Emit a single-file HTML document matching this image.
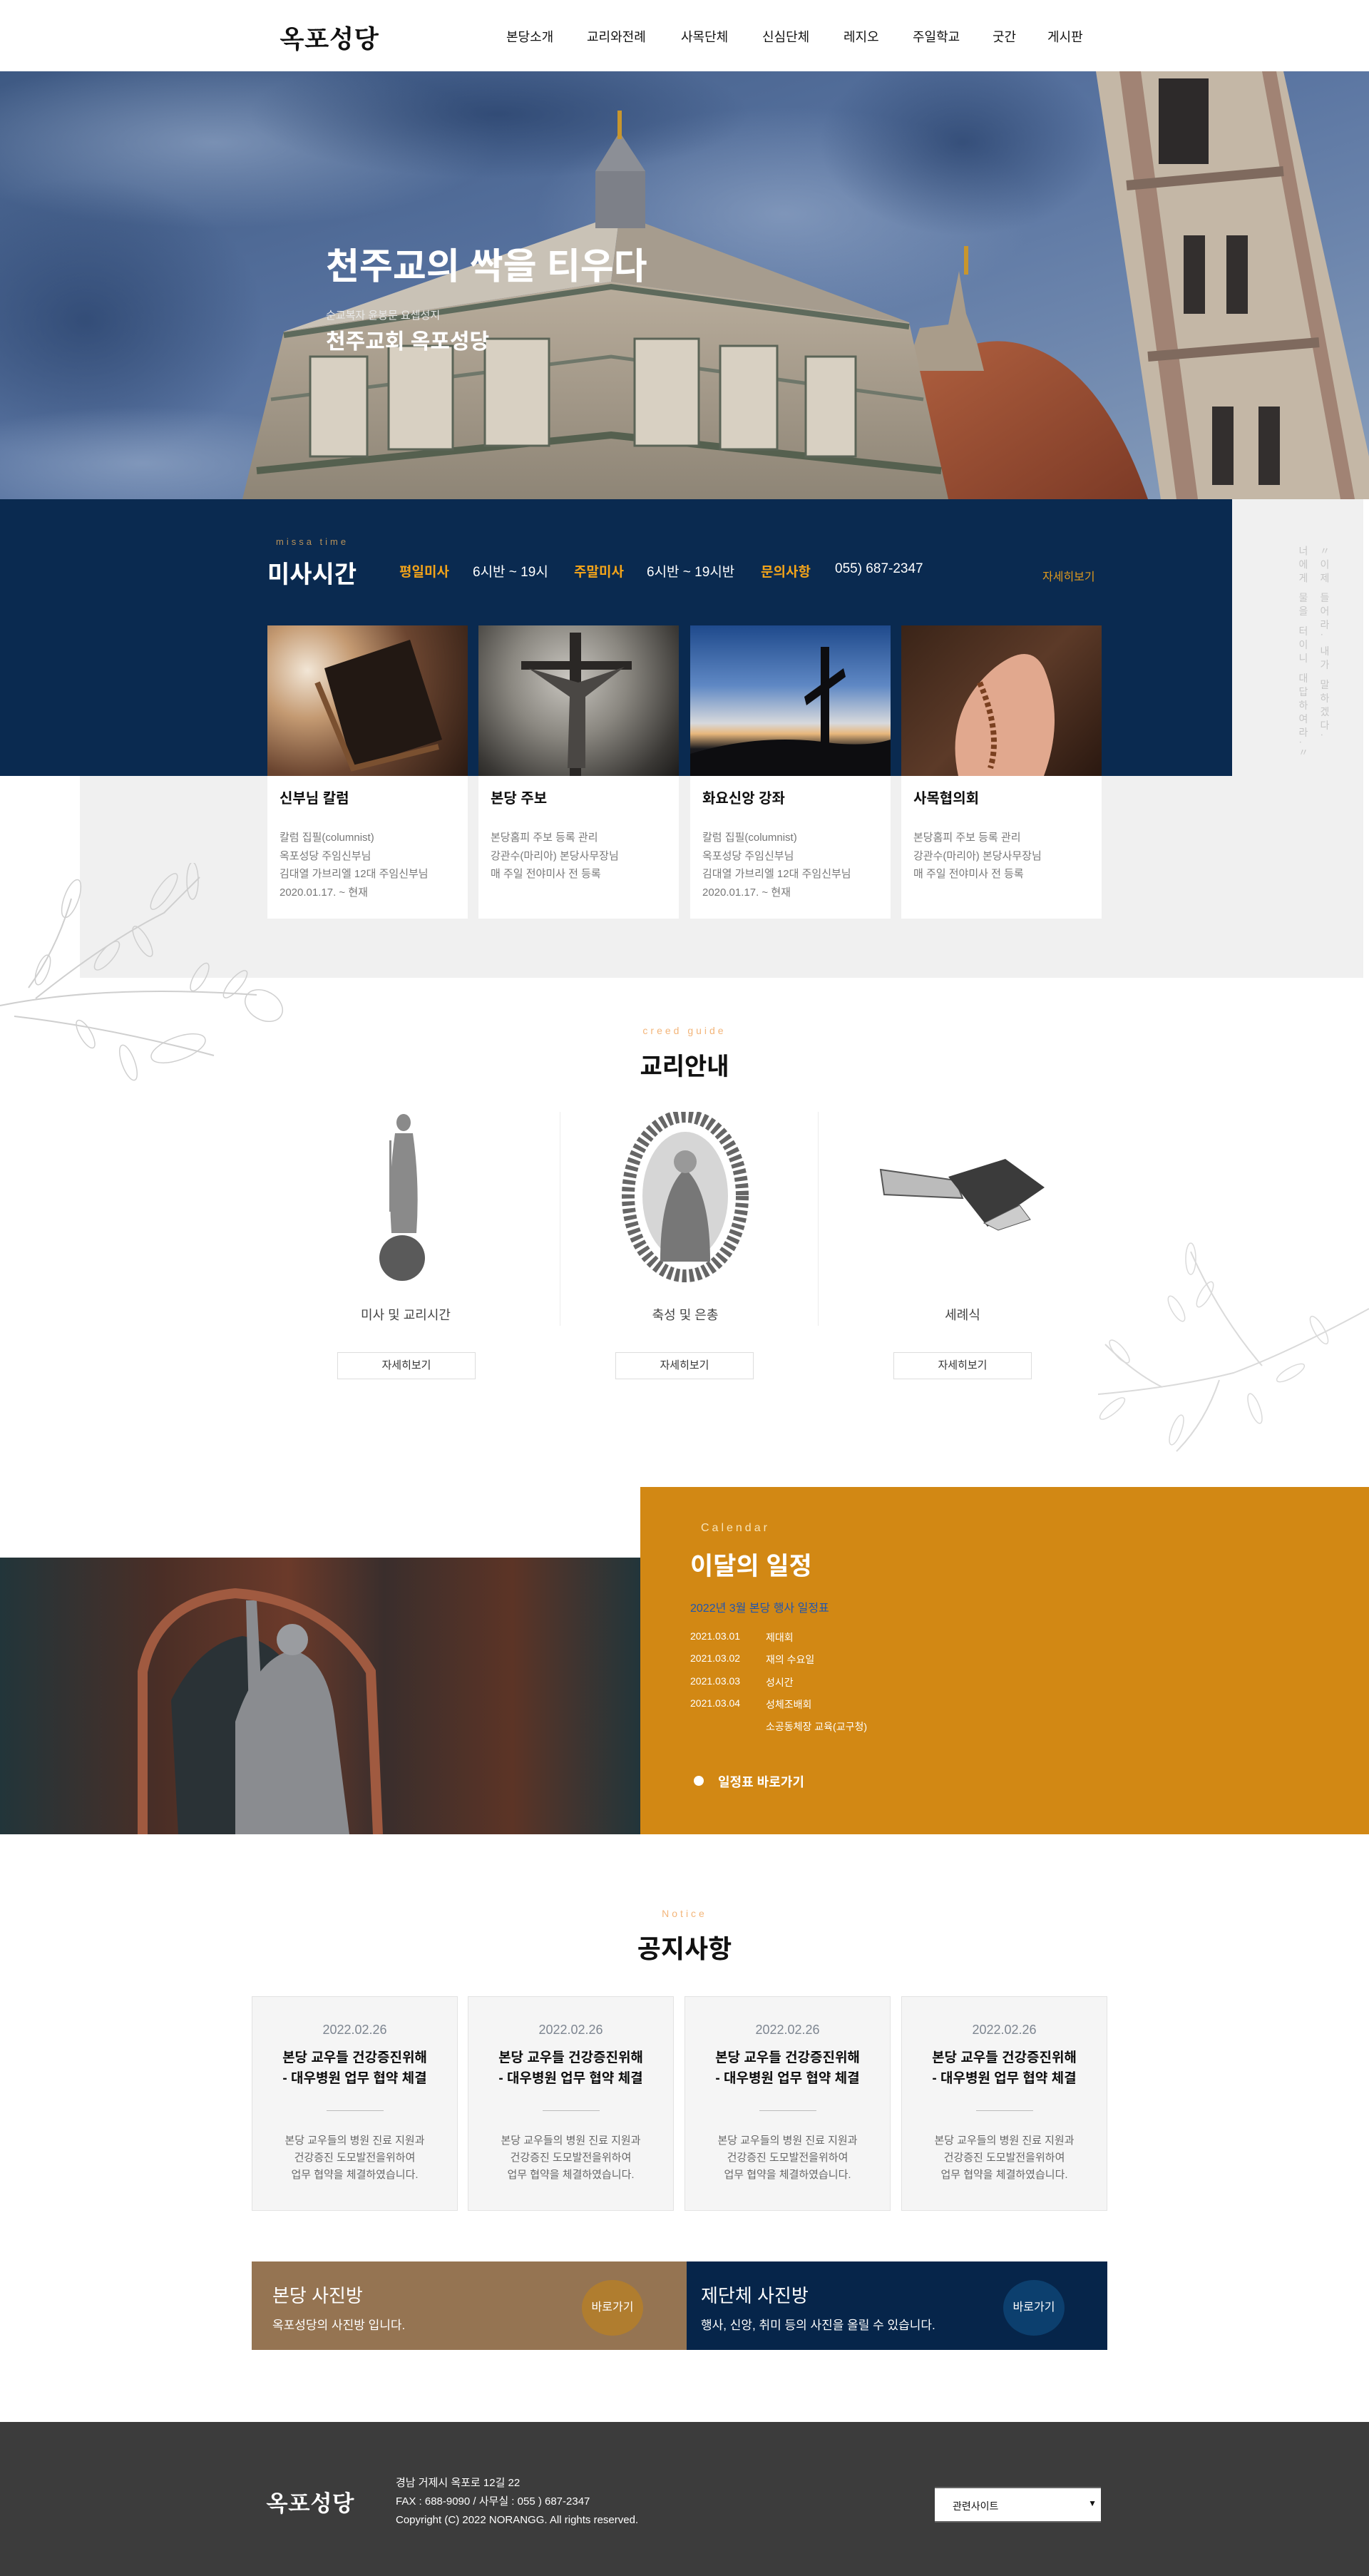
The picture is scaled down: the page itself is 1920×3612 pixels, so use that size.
<!DOCTYPE html>
<html><head><meta charset="utf-8">
<style>
*{margin:0;padding:0;box-sizing:border-box}
body{width:1920px;height:3612px;position:relative;background:#fff;font-family:"Liberation Sans","Noto Sans CJK KR",sans-serif;color:#222;overflow:hidden}
.a{position:absolute}
.serif{font-family:"Liberation Serif","Noto Serif CJK SC",serif}
.nav span{position:absolute;top:38px;font-size:18px;color:#111}
.card{position:absolute;top:877px;width:281px;height:411px;background:#fff}
.card .img{height:211px}
.card h4{position:absolute;left:17px;top:226px;font-size:20px;font-weight:bold;color:#111}
.card p{position:absolute;left:17px;top:285px;font-size:15px;line-height:25.5px;color:#777}
.col-t{position:absolute;top:1830px;font-size:18px;color:#444;text-align:center;width:300px}
.btn{position:absolute;top:1896px;width:194px;height:38px;border:1px solid #ddd;text-align:center;line-height:36px;font-size:15px;color:#333;background:#fff}
.nc{position:absolute;top:2799px;width:289px;height:301px;background:#f5f5f5;border:1px solid #e3e3e3;text-align:center}
.nc .d{position:absolute;top:36px;width:100%;font-size:18px;color:#7d8590}
.nc .t{position:absolute;top:71px;width:100%;font-size:19px;font-weight:bold;line-height:29px;color:#111}
.nc .l{position:absolute;top:159px;left:104px;width:80px;height:1px;background:#bbb}
.nc .x{position:absolute;top:190px;width:100%;font-size:15px;line-height:24px;color:#666}
.cal{position:absolute;left:968px;font-size:14px;color:#fff}
.cal b{font-weight:normal;position:absolute;left:106px;white-space:nowrap}
.vt{position:absolute;writing-mode:vertical-rl;font-size:14px;color:#c6c6c6;letter-spacing:5px;line-height:20px}
</style></head><body>

<!-- header -->
<div class="a serif" style="left:392px;top:27px;font-size:36px;font-weight:bold;color:#111">옥포성당</div>
<div class="nav">
<span style="left:710px">본당소개</span><span style="left:823px">교리와전례</span><span style="left:955px">사목단체</span><span style="left:1069px">신심단체</span><span style="left:1183px">레지오</span><span style="left:1280px">주일학교</span><span style="left:1392px">굿간</span><span style="left:1469px">게시판</span>
</div>

<!-- hero -->
<svg class="a" style="left:0;top:100px" width="1920" height="600" viewBox="0 100 1920 600">
<defs>
<linearGradient id="sky" x1="0" y1="0" x2="1" y2="1"><stop offset="0" stop-color="#3e5983"/><stop offset=".45" stop-color="#5873a0"/><stop offset=".7" stop-color="#6d86ad"/><stop offset="1" stop-color="#8aa0bd"/></linearGradient>
<radialGradient id="cl1" cx=".5" cy=".5" r=".5"><stop offset="0" stop-color="#8fa4c4" stop-opacity=".7"/><stop offset="1" stop-color="#8fa4c4" stop-opacity="0"/></radialGradient>
<radialGradient id="cl2" cx=".5" cy=".5" r=".5"><stop offset="0" stop-color="#27406a" stop-opacity=".7"/><stop offset="1" stop-color="#27406a" stop-opacity="0"/></radialGradient>
<linearGradient id="wall" x1="0" y1="0" x2="0" y2="1"><stop offset="0" stop-color="#b9ad9c"/><stop offset="1" stop-color="#8e8576"/></linearGradient>
<linearGradient id="dome" x1="0" y1="0" x2="1" y2="1"><stop offset="0" stop-color="#b0603f"/><stop offset="1" stop-color="#7c3a26"/></linearGradient>
</defs>
<rect x="0" y="100" width="1920" height="600" fill="url(#sky)"/>
<ellipse cx="300" cy="200" rx="400" ry="120" fill="url(#cl1)"/>
<ellipse cx="1100" cy="300" rx="350" ry="150" fill="url(#cl1)"/>
<ellipse cx="120" cy="450" rx="250" ry="200" fill="url(#cl2)"/>
<ellipse cx="700" cy="160" rx="350" ry="90" fill="url(#cl2)"/>
<ellipse cx="1350" cy="200" rx="200" ry="130" fill="url(#cl2)"/>
<ellipse cx="200" cy="650" rx="300" ry="80" fill="url(#cl1)"/>
<path d="M1270 700 L1290 520 Q1360 470 1420 480 Q1540 500 1610 700Z" fill="url(#dome)"/>
<path d="M1270 520 L1290 460 L1330 455 L1345 380 L1355 440 L1370 480 L1380 520Z" fill="#a99c8a"/>
<rect x="1352" y="345" width="6" height="40" fill="#c8962d"/>
<path d="M869 300 L398 465 L857 395Z" fill="#c9c2b6"/>
<path d="M869 300 L857 395 L1275 452Z" fill="#a69c8e"/>
<path d="M398 465 L857 395 L1275 452 L1330 700 L340 700Z" fill="url(#wall)"/>
<path d="M398 470 L857 402 L1275 458" stroke="#5e6a5c" stroke-width="8" fill="none"/>
<path d="M380 560 L857 500 L1295 560" stroke="#6f776a" stroke-width="5" fill="none"/>
<path d="M360 660 L857 610 L1320 660" stroke="#55604f" stroke-width="10" fill="none"/>
<g fill="#d8d0c2" stroke="#5b6457" stroke-width="3">
<rect x="435" y="500" width="80" height="140"/><rect x="545" y="485" width="90" height="145"/><rect x="680" y="475" width="90" height="150"/>
<rect x="890" y="475" width="90" height="150"/><rect x="1010" y="485" width="80" height="145"/><rect x="1130" y="500" width="70" height="140"/>
</g>
<rect x="835" y="240" width="70" height="80" fill="#7d8088"/>
<path d="M835 240 L869 185 L905 240Z" fill="#8c8f96"/>
<rect x="866" y="155" width="6" height="40" fill="#c8962d"/>
<path d="M1537 100 L1800 100 L1920 640 L1920 700 L1628 700Z" fill="#c4b7a6"/>
<path d="M1570 100 L1600 100 L1680 700 L1650 700Z" fill="#a18374"/>
<path d="M1770 100 L1790 100 L1900 700 L1880 700Z" fill="#a18374"/>
<rect x="1625" y="110" width="70" height="120" fill="#2d2a2a"/>
<rect x="1660" y="330" width="30" height="110" fill="#332f2e"/><rect x="1720" y="330" width="30" height="110" fill="#332f2e"/>
<rect x="1700" y="570" width="30" height="110" fill="#332f2e"/><rect x="1765" y="570" width="30" height="110" fill="#332f2e"/>
<path d="M1580 260 L1800 240" stroke="#7f6a5e" stroke-width="14"/>
<path d="M1610 500 L1850 480" stroke="#7f6a5e" stroke-width="14"/>
</svg>
<div class="a" style="left:457px;top:332px;font-size:51px;font-weight:bold;color:#fff;letter-spacing:0px;white-space:nowrap">천주교의 싹을 티우다</div>
<div class="a" style="left:457px;top:431px;font-size:15px;color:#e8e8e8">순교복자 윤봉문 요셉성지</div>
<div class="a" style="left:457px;top:454px;font-size:30px;font-weight:bold;color:#fff">천주교회 옥포성당</div>

<!-- mass time -->
<div class="a" style="left:112px;top:1088px;width:1800px;height:283px;background:#f0f0f0"></div>
<div class="a" style="left:1728px;top:700px;width:184px;height:388px;background:#f0f0f0"></div>
<div class="a" style="left:0;top:700px;width:1728px;height:388px;background:#0a2a50"></div>
<div class="vt" style="left:1848px;top:765px">〃이제 들어라. 내가 말하겠다.</div>
<div class="vt" style="left:1818px;top:765px">너에게 물을 터이니 대답하여라.〃</div>
<div class="a" style="left:387px;top:752px;font-size:13px;color:#b8925a;letter-spacing:4px">missa time</div>
<div class="a" style="left:375px;top:778px;font-size:34px;color:#fff;font-weight:bold">미사시간</div>
<div class="a" style="left:560px;top:787px;font-size:19px;color:#fff;white-space:nowrap">
<span class="a" style="left:0;color:#f0a21a;font-weight:bold">평일미사</span>
<span class="a" style="left:103px">6시반 ~ 19시</span>
<span class="a" style="left:245px;color:#f0a21a;font-weight:bold">주말미사</span>
<span class="a" style="left:347px">6시반 ~ 19시반</span>
<span class="a" style="left:507px;color:#f0a21a;font-weight:bold">문의사항</span>
<span class="a" style="left:611px">055) 687-2347</span>
</div>
<div class="a" style="left:1462px;top:795px;font-size:16px;color:#e09a1d">자세히보기</div>

<div class="card" style="left:375px"><div class="img" style="background:radial-gradient(circle at 20% 30%,#f2e6d6 0,#c49a72 25%,#6b4530 55%,#2b1a12 100%)"><svg width="281" height="211"><path d="M80 60 L200 20 L245 160 L120 200Z" fill="#221813"/><path d="M70 80 L120 200 L240 170" stroke="#7a5030" stroke-width="8" fill="none"/></svg></div><h4>신부님 칼럼</h4><p>칼럼 집필(columnist)<br>옥포성당 주임신부님<br>김대열 가브리엘 12대 주임신부님<br>2020.01.17. ~ 현재</p></div>
<div class="card" style="left:671px"><div class="img" style="background:radial-gradient(circle at 45% 35%,#c9c6c0 0,#8a8780 40%,#3a3835 80%,#1c1b1a 100%)"><svg width="281" height="211"><rect x="128" y="10" width="16" height="201" fill="#2a2725"/><rect x="60" y="50" width="155" height="12" fill="#2a2725"/><path d="M70 60 L140 80 L205 58 L150 100 L150 200 L125 200 L128 100Z" fill="#4a4744"/></svg></div><h4>본당 주보</h4><p>본당홈피 주보 등록 관리<br>강관수(마리아) 본당사무장님<br>매 주일 전야미사 전 등록</p></div>
<div class="card" style="left:968px"><div class="img" style="background:linear-gradient(180deg,#1f4a8c 0,#5f88c4 40%,#d7d9dc 65%,#e8b77c 72%,#1a1a1e 82%,#0c0c10 100%)"><svg width="281" height="211"><rect x="183" y="30" width="12" height="150" fill="#0d0d10"/><path d="M160 100 L215 60 L218 72 L163 112Z" fill="#0d0d10"/><path d="M0 180 Q100 150 200 165 Q250 170 281 160 L281 211 L0 211Z" fill="#0d0d10"/></svg></div><h4>화요신앙 강좌</h4><p>칼럼 집필(columnist)<br>옥포성당 주임신부님<br>김대열 가브리엘 12대 주임신부님<br>2020.01.17. ~ 현재</p></div>
<div class="card" style="left:1264px"><div class="img" style="background:linear-gradient(135deg,#3a2418 0,#5c3a28 50%,#2a1810 100%)"><svg width="281" height="211"><path d="M80 211 Q60 120 130 60 Q180 20 200 60 Q230 130 200 211Z" fill="#e1a88e"/><path d="M110 80 Q140 150 125 200" stroke="#7a4020" stroke-width="8" stroke-dasharray="6 4" fill="none"/></svg></div><h4>사목협의회</h4><p>본당홈피 주보 등록 관리<br>강관수(마리아) 본당사무장님<br>매 주일 전야미사 전 등록</p></div>

<!-- leaves -->
<svg class="a" style="left:0;top:1210px" width="420" height="320" fill="none" stroke="#cfcfcf" stroke-width="2">
<path d="M0 200 Q150 170 360 185"/><path d="M20 215 Q150 230 300 270"/><path d="M50 190 Q150 110 230 70 Q260 40 280 20"/><path d="M40 175 Q80 120 100 50"/>
<g stroke-width="1.5"><ellipse cx="100" cy="50" rx="10" ry="28" transform="rotate(20 100 50)"/><ellipse cx="230" cy="40" rx="9" ry="30" transform="rotate(35 230 40)"/><ellipse cx="270" cy="25" rx="8" ry="26"/><ellipse cx="330" cy="170" rx="8" ry="24" transform="rotate(40 330 170)"/><ellipse cx="370" cy="200" rx="20" ry="28" transform="rotate(-60 370 200)"/><ellipse cx="250" cy="260" rx="16" ry="40" transform="rotate(70 250 260)"/><ellipse cx="180" cy="280" rx="9" ry="26" transform="rotate(-20 180 280)"/><ellipse cx="150" cy="130" rx="9" ry="25" transform="rotate(40 150 130)"/><ellipse cx="60" cy="150" rx="8" ry="22" transform="rotate(20 60 150)"/><ellipse cx="120" cy="240" rx="8" ry="22" transform="rotate(-30 120 240)"/><ellipse cx="200" cy="110" rx="8" ry="24" transform="rotate(-30 200 110)"/><ellipse cx="280" cy="160" rx="8" ry="22" transform="rotate(30 280 160)"/></g>
</svg>
<svg class="a" style="left:1510px;top:1725px" width="410" height="320" fill="none" stroke="#dadada" stroke-width="2">
<path d="M410 110 Q300 170 220 200 Q140 220 30 230"/><path d="M260 190 Q200 120 160 30"/><path d="M200 210 Q180 270 140 310"/><path d="M120 220 Q80 200 40 160"/>
<g stroke-width="1.5"><ellipse cx="160" cy="40" rx="7" ry="22"/><ellipse cx="180" cy="90" rx="7" ry="20" transform="rotate(30 180 90)"/><ellipse cx="140" cy="110" rx="7" ry="20" transform="rotate(-30 140 110)"/><ellipse cx="60" cy="170" rx="7" ry="20" transform="rotate(-40 60 170)"/><ellipse cx="50" cy="250" rx="7" ry="22" transform="rotate(50 50 250)"/><ellipse cx="140" cy="280" rx="7" ry="22" transform="rotate(20 140 280)"/><ellipse cx="300" cy="200" rx="7" ry="22" transform="rotate(60 300 200)"/><ellipse cx="340" cy="140" rx="7" ry="22" transform="rotate(-30 340 140)"/><ellipse cx="250" cy="250" rx="7" ry="22" transform="rotate(-20 250 250)"/></g>
</svg>

<!-- creed guide -->
<div class="a" style="left:0;width:1920px;text-align:center;top:1437px;font-size:14px;color:#f3b57a;letter-spacing:4px">creed guide</div>
<div class="a" style="left:0;width:1920px;text-align:center;top:1468px;font-size:34px;font-weight:bold;color:#111">교리안내</div>
<div class="a" style="left:785px;top:1559px;width:1px;height:300px;background:#ececec"></div>
<div class="a" style="left:1147px;top:1559px;width:1px;height:300px;background:#ececec"></div>
<svg class="a" style="left:519px;top:1559px" width="100" height="240"><g fill="#8a8a8a"><ellipse cx="47" cy="15" rx="10" ry="12"/><path d="M35 30 Q25 100 30 170 L65 170 Q70 100 60 30Z"/><circle cx="45" cy="205" r="32" fill="#5a5a5a"/><rect x="27" y="40" width="3" height="100"/></g></svg>
<svg class="a" style="left:866px;top:1559px" width="190" height="240"><ellipse cx="95" cy="118" rx="80" ry="112" fill="none" stroke="#666" stroke-width="18" stroke-dasharray="6 4"/><ellipse cx="95" cy="118" rx="60" ry="90" fill="#d6d6d6"/><path d="M60 210 Q60 110 95 80 Q130 110 130 210Z" fill="#777"/><circle cx="95" cy="70" r="16" fill="#999"/></svg>
<svg class="a" style="left:1230px;top:1620px" width="240" height="110"><path d="M5 20 L110 35 L120 60 L10 55Z" fill="#bbb" stroke="#555" stroke-width="2"/><path d="M100 30 L180 5 L235 45 L155 100Z" fill="#3b3b3b"/><path d="M150 95 L200 70 L215 90 L170 105Z" fill="#ccc" stroke="#555"/></svg>
<div class="col-t" style="left:419px">미사 및 교리시간</div>
<div class="col-t" style="left:811px">축성 및 은총</div>
<div class="col-t" style="left:1200px">세례식</div>
<div class="btn" style="left:473px">자세히보기</div>
<div class="btn" style="left:863px">자세히보기</div>
<div class="btn" style="left:1253px">자세히보기</div>

<!-- calendar -->
<div class="a" style="left:0;top:2184px;width:898px;height:388px;background:linear-gradient(90deg,#22353a 0,#4a2e26 25%,#6b3a2a 45%,#3a2e2c 60%,#5c3426 80%,#22353a 100%)">
<svg width="898" height="388"><path d="M250 388 L240 200 Q280 120 340 110 Q400 120 430 200 L470 388Z" fill="#2a3236"/><path d="M330 388 L330 230 Q360 140 410 130 Q460 140 470 230 L490 388Z" fill="#8a8c90"/><circle cx="410" cy="115" r="22" fill="#9a9ca0"/><path d="M350 260 L345 60 L360 60 L370 250Z" fill="#8a8c90"/><path d="M200 388 L200 160 Q220 60 330 50 Q460 60 520 160 L530 388" fill="none" stroke="#a05a40" stroke-width="14"/></svg>
</div>
<div class="a" style="left:898px;top:2085px;width:1022px;height:487px;background:#d28814"></div>
<div class="a" style="left:983px;top:2134px;font-size:16px;color:#f7e3b8;letter-spacing:4px">Calendar</div>
<div class="a" style="left:968px;top:2168px;font-size:35px;font-weight:bold;color:#fff">이달의 일정</div>
<div class="a" style="left:968px;top:2241px;font-size:16px;color:#1d55b0">2022년 3월 본당 행사 일정표</div>
<div class="cal" style="top:2286px">2021.03.01<b>제대회</b></div>
<div class="cal" style="top:2317px">2021.03.02<b>재의 수요일</b></div>
<div class="cal" style="top:2349px">2021.03.03<b>성시간</b></div>
<div class="cal" style="top:2380px">2021.03.04<b>성체조배회</b></div>
<div class="cal" style="top:2411px"><b>소공동체장 교육(교구청)</b></div>
<div class="a" style="left:973px;top:2490px;width:14px;height:14px;border-radius:50%;background:#fff"></div>
<div class="a" style="left:1007px;top:2485px;font-size:18px;font-weight:bold;color:#fff">일정표 바로가기</div>

<!-- notice -->
<div class="a" style="left:0;width:1920px;text-align:center;top:2675px;font-size:14px;color:#f3b57a;letter-spacing:4px">Notice</div>
<div class="a" style="left:0;width:1920px;text-align:center;top:2704px;font-size:36px;font-weight:bold;color:#111">공지사항</div>
<div class="nc" style="left:353px"><div class="d">2022.02.26</div><div class="t">본당 교우들 건강증진위해<br>- 대우병원 업무 협약 체결</div><div class="l"></div><div class="x">본당 교우들의 병원 진료 지원과<br>건강증진 도모발전을위하여<br>업무 협약을 체결하였습니다.</div></div>
<div class="nc" style="left:656px"><div class="d">2022.02.26</div><div class="t">본당 교우들 건강증진위해<br>- 대우병원 업무 협약 체결</div><div class="l"></div><div class="x">본당 교우들의 병원 진료 지원과<br>건강증진 도모발전을위하여<br>업무 협약을 체결하였습니다.</div></div>
<div class="nc" style="left:960px"><div class="d">2022.02.26</div><div class="t">본당 교우들 건강증진위해<br>- 대우병원 업무 협약 체결</div><div class="l"></div><div class="x">본당 교우들의 병원 진료 지원과<br>건강증진 도모발전을위하여<br>업무 협약을 체결하였습니다.</div></div>
<div class="nc" style="left:1264px"><div class="d">2022.02.26</div><div class="t">본당 교우들 건강증진위해<br>- 대우병원 업무 협약 체결</div><div class="l"></div><div class="x">본당 교우들의 병원 진료 지원과<br>건강증진 도모발전을위하여<br>업무 협약을 체결하였습니다.</div></div>

<!-- photo banners -->
<div class="a" style="left:353px;top:3171px;width:610px;height:124px;background:#957452"></div>
<div class="a" style="left:963px;top:3171px;width:590px;height:124px;background:#06254a"></div>
<div class="a" style="left:382px;top:3199px;font-size:26px;color:#fff">본당 사진방</div>
<div class="a" style="left:382px;top:3246px;font-size:17px;color:#fff">옥포성당의 사진방 입니다.</div>
<div class="a" style="left:816px;top:3197px;width:86px;height:78px;border-radius:50%;background:#b07d2f;color:#fff;font-size:16px;text-align:center;line-height:78px">바로가기</div>
<div class="a" style="left:983px;top:3199px;font-size:26px;color:#fff">제단체 사진방</div>
<div class="a" style="left:983px;top:3246px;font-size:17px;color:#fff">행사, 신앙, 취미 등의 사진을 올릴 수 있습니다.</div>
<div class="a" style="left:1407px;top:3197px;width:86px;height:78px;border-radius:50%;background:#0c3f6e;color:#fff;font-size:16px;text-align:center;line-height:78px">바로가기</div>

<!-- footer -->
<div class="a" style="left:0;top:3396px;width:1920px;height:216px;background:#3c3c3c"></div>
<div class="a serif" style="left:373px;top:3485px;font-size:32px;font-weight:bold;color:#fff">옥포성당</div>
<div class="a" style="left:555px;top:3469px;font-size:15px;line-height:26px;color:#fff">경남 거제시 옥포로 12길 22<br>FAX : 688-9090 / 사무실 : 055 ) 687-2347<br>Copyright (C) 2022 NORANGG. All rights reserved.</div>
<div class="a" style="left:1311px;top:3487px;width:233px;height:50px;background:#fff;border-top:2px solid #666;border-bottom:2px solid #666;font-size:14px;color:#111;padding:15px 0 0 25px">관련사이트<span style="position:absolute;right:6px;top:14px;font-size:12px">▼</span></div>
</body></html>
